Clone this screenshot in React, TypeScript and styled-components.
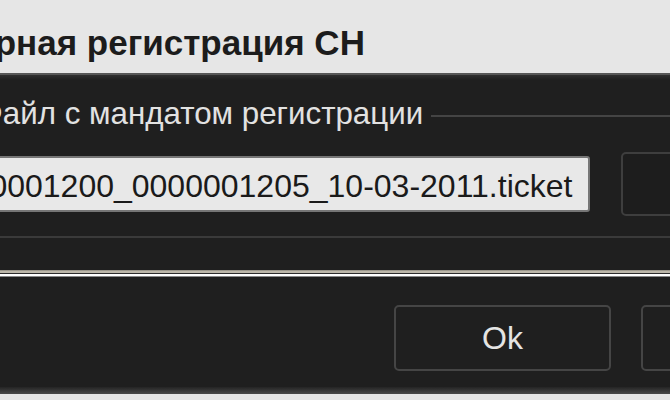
import styled, { createGlobalStyle } from 'styled-components';

const GlobalStyle = createGlobalStyle`
  html, body {
    margin: 0;
    padding: 0;
    background: #1f1f1f;
    overflow: hidden;
  }
`;

export default function App() {
  return (
    <>
      <GlobalStyle />
      <Frame>
        <TitleBar>
          <Title>Повторная регистрация СН</Title>
        </TitleBar>
        <Body>
          <GroupHeader>
            <GroupLabel>Файл с мандатом регистрации</GroupLabel>
            <GroupLine />
          </GroupHeader>
          <FileRow>
            <FileInput>0000001200_0000001205_10-03-2011.ticket</FileInput>
            <BrowseButton />
          </FileRow>
          <GroupBottom />
          <Etched />
          <ButtonRow>
            <DialogButton>Ok</DialogButton>
            <DialogButton />
          </ButtonRow>
        </Body>
        <BottomEdge />
        <BottomBar />
      </Frame>
    </>
  );
}

const Frame = styled.div`
  width: 900px;
  height: 400px;
  margin-left: -120px;
  display: flex;
  flex-direction: column;
  font-family: 'Liberation Sans', Arial, sans-serif;
`;

const TitleBar = styled.div`
  height: 75px;
  box-sizing: border-box;
  padding: 25px 0 0 9px;
  background: #e6e6e6;
  border-bottom: 2px solid #575757;
  flex-shrink: 0;
`;

const Title = styled.div`
  font-size: 35px;
  line-height: 35px;
  font-weight: bold;
  color: #1c1c1c;
  white-space: nowrap;
`;

const Body = styled.div`
  flex: 1;
  display: flex;
  flex-direction: column;
  background: linear-gradient(#303030 0, #1f1f1f 5px);
`;

const GroupHeader = styled.div`
  display: flex;
  align-items: center;
  height: 36px;
  margin-top: 21px;
  padding-left: 99px;
`;

const GroupLabel = styled.span`
  font-size: 31.3px;
  line-height: 36px;
  color: #e2e2e2;
  white-space: nowrap;
`;

const GroupLine = styled.div`
  flex: 1;
  height: 2px;
  margin: 4px 0 0 8px;
  background: #444444;
`;

const FileRow = styled.div`
  display: flex;
  align-items: center;
  margin-top: 20px;
  padding-left: 48px;
  gap: 31px;
`;

const FileInput = styled.div`
  width: 662px;
  height: 56px;
  box-sizing: border-box;
  border: 2px solid #767676;
  border-radius: 3px;
  background: #e8e8e8;
  padding: 4px 0 0 6px;
  font-size: 32px;
  line-height: 48px;
  color: #1a1a1a;
  white-space: nowrap;
  overflow: hidden;
`;

const BrowseButton = styled.div`
  width: 150px;
  height: 64px;
  box-sizing: border-box;
  border: 2px solid #3e3e3e;
  border-radius: 5px;
  background: #1d1d1d;
`;

const GroupBottom = styled.div`
  height: 2px;
  margin-top: 20px;
  background: #3a3a3a;
`;

const Etched = styled.div`
  height: 7px;
  margin-top: 32px;
  background: linear-gradient(
    #9a968b 0 1px,
    #bdb8ab 1px 3px,
    #2c2c2c 3px 4px,
    #ffffff 4px 6px,
    #8a8a8a 6px 7px
  );
`;

const ButtonRow = styled.div`
  display: flex;
  gap: 30px;
  margin-top: 28px;
  padding-left: 514px;
`;

const DialogButton = styled.div`
  width: 217px;
  height: 66px;
  box-sizing: border-box;
  border: 2px solid #454545;
  border-radius: 5px;
  background: #1f1f1f;
  display: flex;
  align-items: center;
  justify-content: center;
  font-size: 32px;
  color: #e4e4e4;
  flex-shrink: 0;
`;

const BottomEdge = styled.div`
  height: 7px;
  flex-shrink: 0;
  background: linear-gradient(#242424, #4a4a4a);
`;

const BottomBar = styled.div`
  height: 6px;
  flex-shrink: 0;
  background: #e6e6e6;
`;
